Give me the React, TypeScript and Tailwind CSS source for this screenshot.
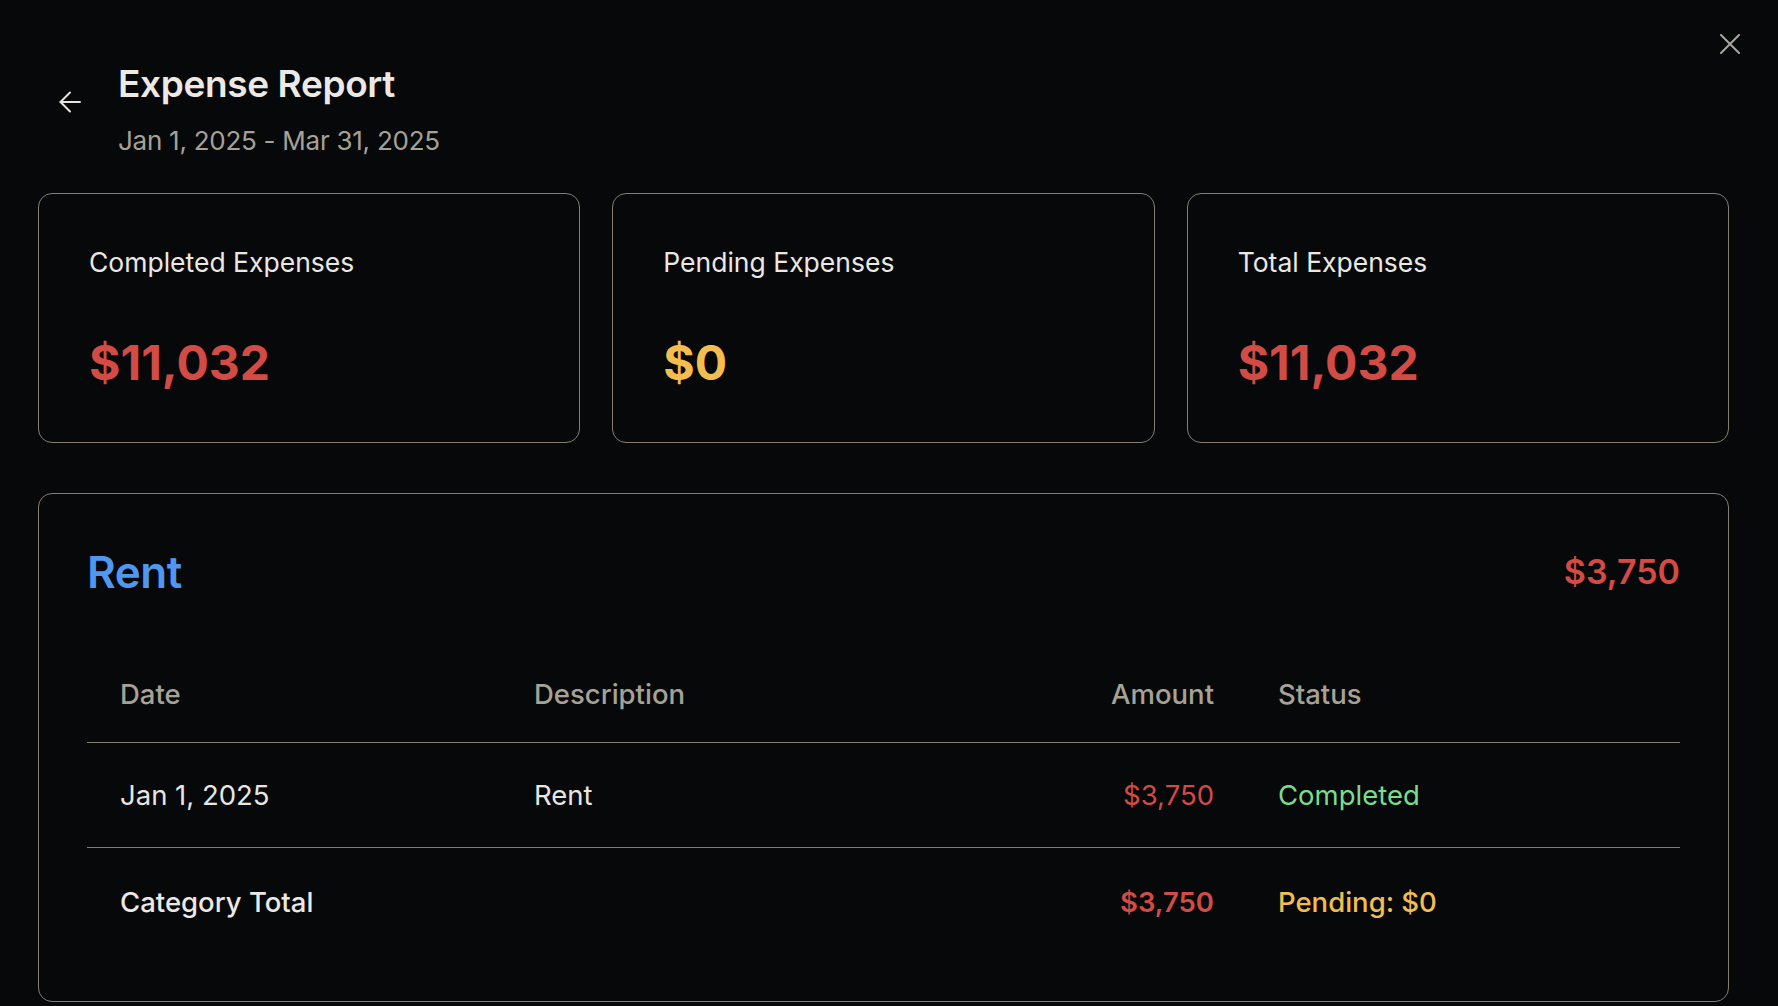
import React from "react";

function BackArrow() {
  return (
    <svg width="22" height="22" viewBox="0 0 22 22" fill="none" stroke="#e6e3de" strokeWidth="2" strokeLinecap="round" strokeLinejoin="round">
      <path d="M21 11H1.5" />
      <path d="M11 1.5 1.5 11 11 20.5" />
    </svg>
  );
}

function CloseIcon() {
  return (
    <svg width="20" height="20" viewBox="0 0 20 20" fill="none" stroke="#a9a6a0" strokeWidth="2" strokeLinecap="round">
      <path d="M1 1l18 18M19 1 1 19" />
    </svg>
  );
}

function StatCard({ label, value, color }: { label: string; value: string; color: string }) {
  return (
    <div className="h-[250px] rounded-[14px] border border-[#857e70] pl-[50px] pr-12 pt-[48px]">
      <div className="text-[26.5px] leading-[40px] text-[#ebe8e3]">{label}</div>
      <div className={`mt-[54px] text-[48px] leading-[54px] font-bold ${color}`}>{value}</div>
    </div>
  );
}

export default function App() {
  return (
    <div className="relative w-[1778px] h-[1006px] overflow-hidden bg-[#07080a] font-['Inter',sans-serif]">
      <button className="absolute left-[1720px] top-[34px]">
        <CloseIcon />
      </button>
      <div className="pl-[38px] pr-[49px]">
        <div className="flex pt-[62px]">
          <div className="ml-[21px] mt-[29px] w-[22px] shrink-0">
            <BackArrow />
          </div>
          <div className="ml-[37px]">
            <div className="text-[37px] leading-[44px] font-semibold tracking-[-0.01em] text-[#ece9e4]">Expense Report</div>
            <div className="mt-[15px] text-[26px] leading-[40px] tracking-[-0.01em] text-[#a6a196]">Jan 1, 2025 - Mar 31, 2025</div>
          </div>
        </div>

        <div className="mt-[32px] grid grid-cols-3 gap-8">
          <StatCard label="Completed Expenses" value="$11,032" color="text-[#d24b45]" />
          <StatCard label="Pending Expenses" value="$0" color="text-[#f3bd4f]" />
          <StatCard label="Total Expenses" value="$11,032" color="text-[#d24b45]" />
        </div>

        <div className="mt-[50px] h-[509px] rounded-[14px] border border-[#857e70] px-12 pt-12">
          <div className="mt-[3px] flex h-[54px] items-center justify-between">
            <div className="text-[44px] leading-[54px] font-semibold tracking-[-0.01em] text-[#5097ef]">Rent</div>
            <div className="text-[34px] leading-[54px] font-semibold text-[#d24b45]">$3,750</div>
          </div>

          <div className="mt-[47px]">
            <div className="grid grid-cols-[414px_498px_245px_1fr] border-b border-[#857e70] pt-[28px] pb-[28px] text-[27.5px] leading-[40px] font-medium text-[#a7a296]">
              <div className="pl-[33px]">Date</div>
              <div className="pl-[33px]">Description</div>
              <div className="pr-[30px] text-right">Amount</div>
              <div className="pl-[34px]">Status</div>
            </div>
            <div className="grid grid-cols-[414px_498px_245px_1fr] border-b border-[#857e70] pt-[32px] pb-[32px] text-[27.5px] leading-[40px] text-[#e8e6e1]">
              <div className="pl-[33px]">Jan 1, 2025</div>
              <div className="pl-[33px]">Rent</div>
              <div className="pr-[30px] text-right text-[#d24b45]">$3,750</div>
              <div className="pl-[34px] text-[#7ddc8a]">Completed</div>
            </div>
            <div className="grid grid-cols-[414px_498px_245px_1fr] pt-[34px] pb-[31px] text-[27.5px] leading-[40px] font-medium text-[#ece9e4]">
              <div className="pl-[33px]">Category Total</div>
              <div className="pl-[33px]"></div>
              <div className="pr-[30px] text-right font-semibold text-[#d24b45]">$3,750</div>
              <div className="pl-[34px] text-[#f3bd4f]">Pending: $0</div>
            </div>
          </div>
        </div>
      </div>
    </div>
  );
}
